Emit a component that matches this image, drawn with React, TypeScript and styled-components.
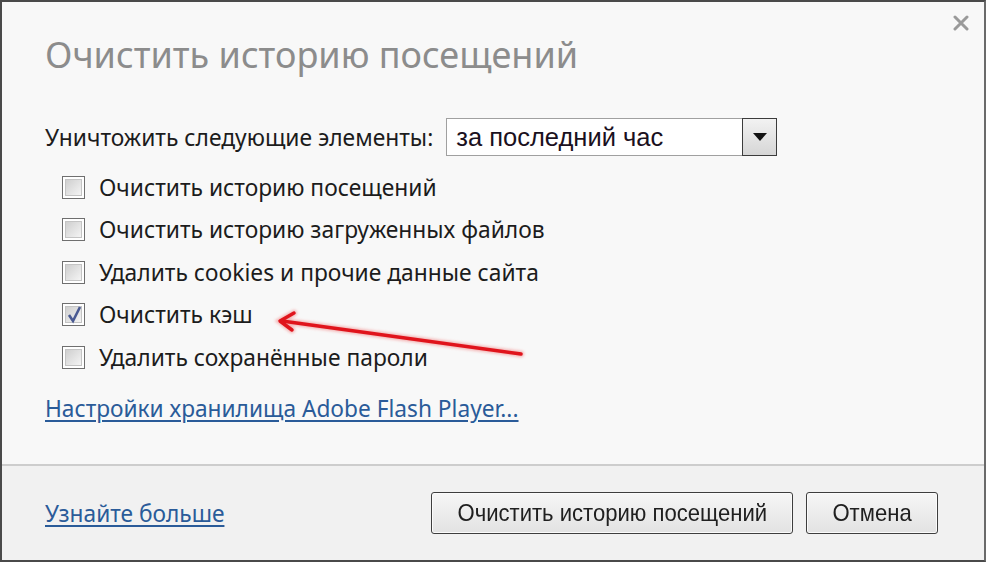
import { FC } from 'react';
import styled, { createGlobalStyle } from 'styled-components';

const GlobalStyle = createGlobalStyle`
  html, body {
    margin: 0;
    padding: 0;
    background: #f7f7f7;
  }
  body {
    font-family: 'Noto Sans', 'Open Sans', sans-serif;
  }
`;

const ITEMS = [
  { label: 'Очистить историю посещений', checked: false },
  { label: 'Очистить историю загруженных файлов', checked: false },
  { label: 'Удалить cookies и прочие данные сайта', checked: false },
  { label: 'Очистить кэш', checked: true },
  { label: 'Удалить сохранённые пароли', checked: false },
];

const Dialog = styled.div`
  position: relative;
  box-sizing: border-box;
  width: 986px;
  height: 562px;
  border: 2px solid #4a4a4a;
  border-right-color: #6a6a6a;
  background: #f8f8f8;
  display: flex;
  flex-direction: column;
  overflow: hidden;
`;

const Body = styled.div`
  flex: 1;
  display: flex;
  flex-direction: column;
  padding: 28px 0 0 43px;
`;

const Title = styled.h1`
  margin: 0;
  font-family: 'Noto Sans', sans-serif;
  font-weight: 400;
  font-size: 36px;
  line-height: 50px;
  color: #8c8c8c;
`;

const CloseButton = styled.button`
  position: absolute;
  top: 10px;
  right: 12px;
  width: 22px;
  height: 22px;
  padding: 0;
  border: none;
  background: transparent;
  display: flex;
  align-items: center;
  justify-content: center;
`;

const RangeRow = styled.div`
  display: flex;
  align-items: center;
  gap: 13px;
  margin-top: 38px;
  height: 38px;
`;

const Label = styled.span`
  font-size: 22.8px;
  color: #1c1c1c;
`;

const Select = styled.div`
  box-sizing: border-box;
  width: 331px;
  height: 38px;
  border: 1px solid #a0a0a0;
  background: #fff;
  display: flex;
  align-items: stretch;
`;

const SelectValue = styled.span`
  flex: 1;
  display: flex;
  align-items: center;
  padding-left: 9px;
  font-family: 'Liberation Sans', Arial, sans-serif;
  font-size: 25.5px;
  color: #1a1020;
`;

const SelectArrow = styled.span`
  box-sizing: border-box;
  width: 35px;
  border: 1px solid #3c3c3c;
  margin: -1px -1px -1px 0;
  background: linear-gradient(#f2f2f2, #d6d6d6);
  display: flex;
  align-items: center;
  justify-content: center;
`;

const List = styled.ul`
  list-style: none;
  margin: 10px 0 0;
  padding: 0 0 0 17px;
`;

const Item = styled.li`
  height: 42.5px;
  display: flex;
  align-items: center;
  gap: 14px;
`;

const Box = styled.span<{ $checked: boolean }>`
  box-sizing: border-box;
  width: 23px;
  height: 23px;
  border: 1px solid #6f6f6f;
  background: #fff;
  padding: 2px;
  display: flex;

  &::before {
    content: '';
    flex: 1;
    border: 1px solid #c4c4c4;
    background: linear-gradient(135deg, #cfcfcf, #f4f4f4);
  }

  ${({ $checked }) => $checked && `
    position: relative;
  `}
`;

const Check = styled.svg`
  position: absolute;
  left: 2px;
  top: 0;
`;

const Link = styled.a`
  color: #2a5b99;
  text-decoration: underline;
  text-underline-offset: 3px;
  font-size: 22.7px;
  cursor: pointer;
`;

const FlashLink = styled(Link)`
  margin-top: 16px;
  line-height: 28px;
  align-self: flex-start;
`;

const Footer = styled.div`
  box-sizing: border-box;
  height: 96px;
  border-top: 2px solid #cdcdcd;
  background: #f1f1f1;
  display: flex;
  align-items: center;
  padding: 0 46px 0 43px;
  gap: 13px;
`;

const FooterLink = styled(Link)`
  margin-right: auto;
`;

const Button = styled.button<{ $width: number }>`
  box-sizing: border-box;
  width: ${({ $width }) => $width}px;
  height: 42px;
  border: 1px solid #3e3e3e;
  border-radius: 3px;
  background: linear-gradient(#f6f6f6, #e2e2e2);
  box-shadow: inset 0 0 0 1px #fbfbfb;
  font-family: 'Liberation Sans', Arial, sans-serif;
  font-size: 24px;
  color: #202020;
  padding: 0;

  span {
    display: inline-block;
    transform: scaleX(0.92);
  }
`;

const Arrow = styled.svg`
  position: absolute;
  left: 0;
  top: 0;
  pointer-events: none;
`;

const CheckBox: FC<{ checked: boolean }> = ({ checked }) => (
  <Box $checked={checked}>
    {checked && (
      <Check width="18" height="21" viewBox="0 0 18 21">
        <path d="M4 11 L8 17 L15 3" fill="none" stroke="#4a5a92" strokeWidth="2.6" />
      </Check>
    )}
  </Box>
);

const App: FC = () => (
  <>
    <GlobalStyle />
    <Dialog>
      <CloseButton aria-label="Закрыть">
        <svg width="16" height="16" viewBox="0 0 16 16">
          <path d="M2 2 L14 14 M14 2 L2 14" stroke="#9a9a9a" strokeWidth="3" strokeLinecap="round" />
        </svg>
      </CloseButton>
      <Body>
        <Title>Очистить историю посещений</Title>
        <RangeRow>
          <Label>Уничтожить следующие элементы:</Label>
          <Select>
            <SelectValue>за последний час</SelectValue>
            <SelectArrow>
              <svg width="14" height="8" viewBox="0 0 14 8">
                <path d="M0 0 H14 L7 8 Z" fill="#111" />
              </svg>
            </SelectArrow>
          </Select>
        </RangeRow>
        <List>
          {ITEMS.map((item) => (
            <Item key={item.label}>
              <CheckBox checked={item.checked} />
              <Label>{item.label}</Label>
            </Item>
          ))}
        </List>
        <FlashLink>Настройки хранилища Adobe Flash Player...</FlashLink>
      </Body>
      <Footer>
        <FooterLink>Узнайте больше</FooterLink>
        <Button $width={362}><span>Очистить историю посещений</span></Button>
        <Button $width={132}><span>Отмена</span></Button>
      </Footer>
      <Arrow width="986" height="562" viewBox="0 0 986 562">
        <defs>
          <filter id="glow" x="-10%" y="-50%" width="120%" height="200%">
            <feGaussianBlur stdDeviation="1.5" />
          </filter>
        </defs>
        <g stroke="#f08080" strokeWidth="6" fill="none" strokeLinecap="round" filter="url(#glow)" opacity="0.6">
          <path d="M519 352 L280 319" />
          <path d="M292 311 L278 319 L290 328" />
        </g>
        <g stroke="#e0141c" strokeWidth="3.5" fill="none" strokeLinecap="round" strokeLinejoin="round">
          <path d="M519 352 L280 319" />
          <path d="M292 311 L278 319 L290 328" />
        </g>
      </Arrow>
    </Dialog>
  </>
);

export default App;
